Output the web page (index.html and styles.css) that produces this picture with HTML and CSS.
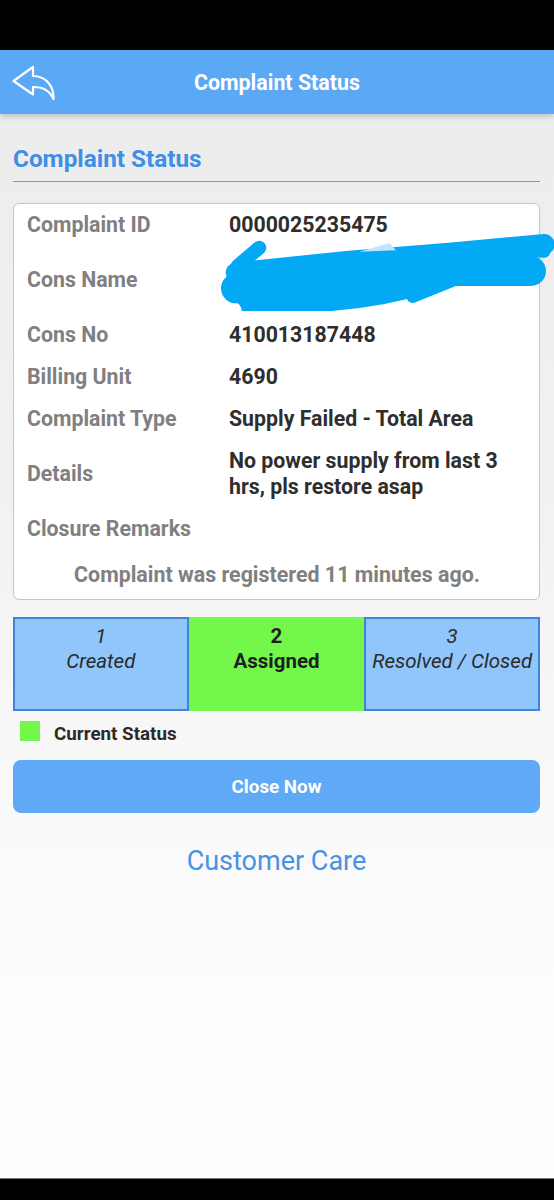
FILE: index.html
```html
<!DOCTYPE html>
<html>
<head>
<meta charset="utf-8">
<link rel="stylesheet" href="styles.css">
</head>
<body>
<div class="screen">
  <div class="status-bar"></div>
  <header class="app-bar">
    <svg class="back" viewBox="0 0 44 36" width="44" height="36">
      <path d="M1.5 16 L21 2 L21 11 C33 11 42 20 41.5 34 C37 25 31 22 21 22 L21 29.5 Z" fill="none" stroke="#fff" stroke-width="2.2" stroke-linejoin="round"/>
    </svg>
    <h1 class="title">Complaint Status</h1>
  </header>
  <main class="content">
    <h2 class="heading">Complaint Status</h2>
    <section class="card">
      <div class="row"><div class="label">Complaint ID</div><div class="value">0000025235475</div></div>
      <div class="row row-name"><div class="label">Cons Name</div><div class="value">&nbsp;<br>&nbsp;</div>
        <svg class="scribble" viewBox="0 0 1017 240" width="339" height="80">
          <g stroke="#03a9f4" stroke-linecap="round" stroke-linejoin="round" fill="none">
            <path d="M60 125 L400 90 L700 66 L985 40" stroke-width="62"/>
            <path d="M60 172 L350 152 L650 120 L945 120" stroke-width="90"/>
            <path d="M100 210 Q400 228 650 150" stroke-width="64"/>
            <path d="M130 50 L65 105" stroke-width="42"/>
            <path d="M95 200 L95 232" stroke-width="38"/>
            <path d="M590 198 L720 145" stroke-width="36"/>
            <path d="M860 60 L985 62" stroke-width="36"/>
          </g>
          <ellipse cx="175" cy="172" rx="140" ry="74" fill="#03a9f4"/>
          <polygon points="430,62 520,36 540,58" fill="#bfe6fb"/>
        </svg>
      </div>
      <div class="row"><div class="label">Cons No</div><div class="value">410013187448</div></div>
      <div class="row"><div class="label">Billing Unit</div><div class="value">4690</div></div>
      <div class="row"><div class="label">Complaint Type</div><div class="value">Supply Failed - Total Area</div></div>
      <div class="row"><div class="label">Details</div><div class="value">No power supply from last 3 hrs, pls restore asap</div></div>
      <div class="row"><div class="label">Closure Remarks</div><div class="value"></div></div>
      <p class="registered">Complaint was registered 11 minutes ago.</p>
    </section>
    <section class="steps">
      <div class="step"><span>1</span><span>Created</span></div>
      <div class="step step-current"><span>2</span><span>Assigned</span></div>
      <div class="step"><span>3</span><span>Resolved / Closed</span></div>
    </section>
    <div class="legend"><span class="swatch"></span><span class="legend-text">Current Status</span></div>
    <button class="close-btn">Close Now</button>
    <a class="care">Customer Care</a>
  </main>
  <div class="nav-bar"></div>
</div>
</body>
</html>
```
FILE: styles.css
```css
* { box-sizing: border-box; }
html, body { margin: 0; padding: 0; }
body {
  font-family: Roboto, "Liberation Sans", Arial, sans-serif;
  width: 554px;
  height: 1200px;
  overflow: hidden;
}
.screen {
  height: 1200px;
  display: flex;
  flex-direction: column;
  background: linear-gradient(#ebebeb 0%, #f1f1f1 40%, #fafafa 70%, #fefefe 90%);
}
.status-bar { height: 50px; background: #000; flex: none; }
.app-bar {
  position: relative;
  height: 64px;
  flex: none;
  background: #5ba8f5;
  display: flex;
  align-items: center;
  justify-content: center;
  box-shadow: 0 2px 6px rgba(0,0,0,0.22);
  z-index: 1;
}
.back { position: absolute; left: 12px; top: 15px; }
.title {
  margin: 0;
  color: #fff;
  font-size: 21.4px;
  font-weight: 700;
}
.content {
  flex: 1;
  display: flex;
  flex-direction: column;
  padding: 0 14px 0 13px;
}
.heading {
  margin: 31px 0 0;
  color: #3d8fe8;
  font-size: 24.3px;
  line-height: 28px;
  font-weight: 700;
  padding-bottom: 8px;
  border-bottom: 1px solid #5d9fe6;
}
.card {
  position: relative;
  margin-top: 21px;
  background: #fff;
  border: 1px solid #a9cdf1;
  border-radius: 6px;
  padding: 0 12px 11px 13px;
}
.row {
  display: flex;
  align-items: center;
  padding: 8px 0;
  font-size: 21.3px;
  line-height: 26px;
  font-weight: 700;
}
.label { width: 202px; flex: none; color: #808080; }
.value { flex: 1; color: #2e2e2e; }
.row-name { position: relative; }
.scribble { position: absolute; left: 189px; top: -15px; }
.registered {
  margin: 12px 0 0;
  text-align: center;
  font-size: 21.4px;
  line-height: 26px;
  font-weight: 700;
  color: #808080;
}
.steps {
  margin-top: 17px;
  display: grid;
  grid-template-columns: 1fr 1fr 1fr;
  height: 94px;
}
.step {
  background: #90c6fb;
  border: 2px solid #3f84d8;
  display: flex;
  flex-direction: column;
  align-items: center;
  padding-top: 5px;
  font-size: 20.5px;
  line-height: 25px;
  font-style: italic;
  color: #2b2b2b;
  white-space: nowrap;
}
.step-current {
  background: #72f74a;
  border-color: #72f74a;
  font-style: normal;
  font-weight: 700;
  color: #1f1f1f;
}
.legend {
  margin-top: 10px;
  display: flex;
  align-items: center;
  padding-left: 7px;
  height: 20px;
}
.swatch { width: 20px; height: 20px; background: #72f74a; flex: none; }
.legend-text {
  margin-left: 14px;
  font-size: 18.8px;
  font-weight: 700;
  color: #2a2a2a;
  padding-top: 5px;
}
.close-btn {
  margin-top: 19px;
  height: 53px;
  border: none;
  border-radius: 8px;
  background: #5fa9f6;
  color: #fff;
  font-family: inherit;
  font-size: 18.8px;
  font-weight: 700;
}
.care {
  margin-top: 33px;
  text-align: center;
  font-size: 27px;
  line-height: 30px;
  color: #4693e6;
}
.nav-bar {
  height: 22px;
  flex: none;
  background: #000;
  border-top: 1px solid #777;
}
```
